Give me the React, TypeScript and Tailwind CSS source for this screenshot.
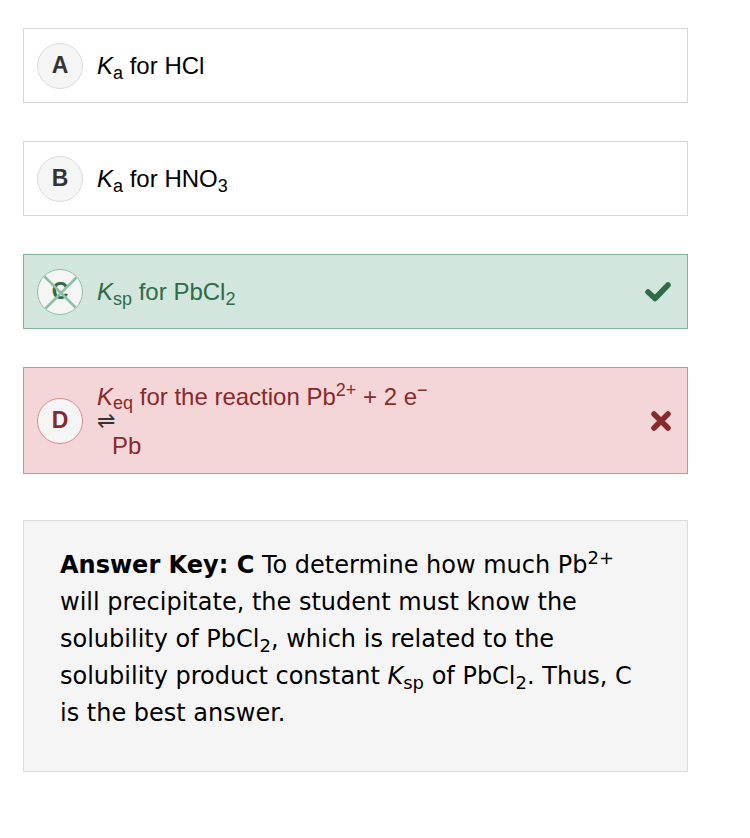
import React from 'react';

type Status = 'none' | 'correct' | 'wrong';

function Letter({ letter, status }: { letter: string; status: Status }) {
  const ring =
    status === 'correct'
      ? 'border-[#8cbfa5] text-[#2e6b46]'
      : status === 'wrong'
      ? 'border-[#e08a8e] text-[#862a2a]'
      : 'border-[#dcdcdc] text-[#333333]';
  return (
    <div
      className={`relative flex h-[46px] w-[46px] shrink-0 items-center justify-center overflow-hidden rounded-full border bg-[#f5f5f5] text-[23px] font-bold ${ring}`}
    >
      <span className="relative z-10">{letter}</span>
      {status === 'correct' && (
        <svg className="absolute inset-0 z-20" viewBox="0 0 46 46" width="46" height="46">
          <line x1="6" y1="6" x2="40" y2="40" stroke="#8cbfa5" strokeWidth="2.5" />
          <line x1="40" y1="6" x2="6" y2="40" stroke="#8cbfa5" strokeWidth="2.5" />
        </svg>
      )}
    </div>
  );
}

function Option({
  letter,
  status = 'none',
  children,
  tall = false,
}: {
  letter: string;
  status?: Status;
  children: React.ReactNode;
  tall?: boolean;
}) {
  const box =
    status === 'correct'
      ? 'bg-[#d2e6de] border-[#7fb39a] text-[#2e6b46]'
      : status === 'wrong'
      ? 'bg-[#f4d6d8] border-[#e0898d] text-[#862a2a]'
      : 'bg-white border-[#d6d6d6] text-black';
  return (
    <div
      className={`flex items-center border px-[13px] ${tall ? 'h-[107px]' : 'h-[75px]'} ${box}`}
    >
      <Letter letter={letter} status={status} />
      <div className="ml-[14px] flex-1 text-[24px] leading-[27px]">{children}</div>
      {status === 'correct' && (
        <svg width="28" height="21" viewBox="0 0 28 21" className="mr-[2px]">
          <path d="M4 11 L11 17.5 L24 4" fill="none" stroke="#2e6b46" strokeWidth="5.5" strokeLinecap="round" strokeLinejoin="round" />
        </svg>
      )}
      {status === 'wrong' && (
        <svg width="22" height="22" viewBox="0 0 22 22" className="mr-[2px]">
          <path d="M4 4 L18 18 M18 4 L4 18" fill="none" stroke="#862a2a" strokeWidth="5.5" strokeLinecap="round" />
        </svg>
      )}
    </div>
  );
}

export default function App() {
  return (
    <div
      className="min-h-screen bg-white px-[23px] pt-[28px] pb-10"
      style={{ fontFamily: '"Liberation Sans", Arial, sans-serif' }}
    >
      <div className="w-[665px]">
        <div className="flex flex-col gap-[38px]">
          <Option letter="A">
            <i>K</i>
            <sub>a</sub> for HCl
          </Option>
          <Option letter="B">
            <i>K</i>
            <sub>a</sub> for HNO<sub>3</sub>
          </Option>
          <Option letter="C" status="correct">
            <i>K</i>
            <sub>sp</sub> for PbCl<sub>2</sub>
          </Option>
          <Option letter="D" status="wrong" tall>
            <div>
              <i>K</i>
              <sub>eq</sub> for the reaction Pb<sup>2+</sup> + 2 e<sup>−</sup>
            </div>
            <div className="text-[22px] leading-[22px] text-[#333333]">⇌</div>
            <div className="ml-[15px]">Pb</div>
          </Option>
        </div>
        <div
          className="mt-[46px] h-[252px] border border-[#dcdcdc] bg-[#f5f5f5] pl-[36px] pr-[40px] pt-[26px] text-[24px] leading-[37px] text-black"
          style={{ fontFamily: '"DejaVu Sans", Verdana, sans-serif' }}
        >
          <b>Answer Key: C</b> To determine how much Pb<sup>2+</sup> will precipitate, the student must know the solubility of PbCl<sub>2</sub>, which is related to the solubility product constant <i>K</i>
          <sub>sp</sub> of PbCl<sub>2</sub>. Thus, C is the best answer.
        </div>
      </div>
    </div>
  );
}
